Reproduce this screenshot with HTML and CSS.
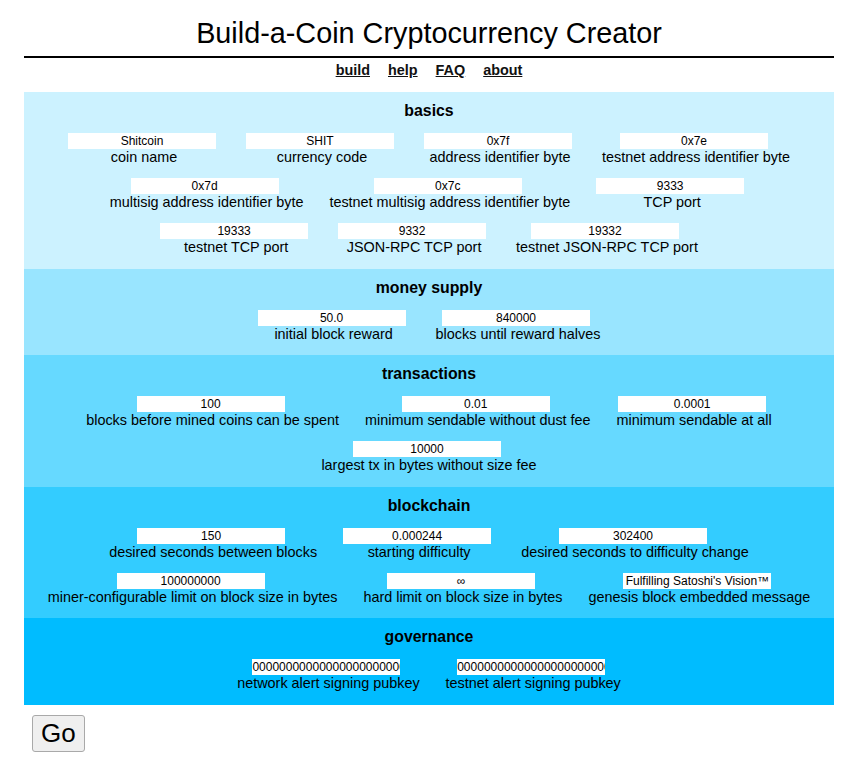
FILE: index.html
```html
<!DOCTYPE html>
<html lang="en">
<head>
  <meta charset="UTF-8">
  <title>Build-a-Coin Cryptocurrency Creator</title>
  <link rel="stylesheet" href="styles.css">
</head>
<body>

<div class="page">
  <h1 class="title">Build-a-Coin Cryptocurrency Creator</h1>

  <div class="menu">
    <a href="#">build</a>
    <a href="#">help</a>
    <a href="#">FAQ</a>
    <a href="#">about</a>
  </div>

  <form class="builder" onsubmit="return false">
    <div class="group basics">
      <h2>basics</h2>
      <div class="row">
        <label class="field"><input type="text" value="Shitcoin"><span>coin name</span></label>
        <label class="field"><input type="text" value="SHIT"><span>currency code</span></label>
        <label class="field"><input type="text" value="0x7f"><span>address identifier byte</span></label>
        <label class="field"><input type="text" value="0x7e"><span>testnet address identifier byte</span></label>
      </div>
      <div class="row">
        <label class="field"><input type="text" value="0x7d"><span>multisig address identifier byte</span></label>
        <label class="field"><input type="text" value="0x7c"><span>testnet multisig address identifier byte</span></label>
        <label class="field"><input type="text" value="9333"><span>TCP port</span></label>
      </div>
      <div class="row">
        <label class="field"><input type="text" value="19333"><span>testnet TCP port</span></label>
        <label class="field"><input type="text" value="9332"><span>JSON-RPC TCP port</span></label>
        <label class="field"><input type="text" value="19332"><span>testnet JSON-RPC TCP port</span></label>
      </div>
    </div>

    <div class="group supply">
      <h2>money supply</h2>
      <div class="row">
        <label class="field"><input type="text" value="50.0"><span>initial block reward</span></label>
        <label class="field"><input type="text" value="840000"><span>blocks until reward halves</span></label>
      </div>
    </div>

    <div class="group transactions">
      <h2>transactions</h2>
      <div class="row">
        <label class="field"><input type="text" value="100"><span>blocks before mined coins can be spent</span></label>
        <label class="field"><input type="text" value="0.01"><span>minimum sendable without dust fee</span></label>
        <label class="field"><input type="text" value="0.0001"><span>minimum sendable at all</span></label>
      </div>
      <div class="row">
        <label class="field"><input type="text" value="10000"><span>largest tx in bytes without size fee</span></label>
      </div>
    </div>

    <div class="group blockchain">
      <h2>blockchain</h2>
      <div class="row">
        <label class="field"><input type="text" value="150"><span>desired seconds between blocks</span></label>
        <label class="field"><input type="text" value="0.000244"><span>starting difficulty</span></label>
        <label class="field"><input type="text" value="302400"><span>desired seconds to difficulty change</span></label>
      </div>
      <div class="row">
        <label class="field"><input type="text" value="100000000"><span>miner-configurable limit on block size in bytes</span></label>
        <label class="field"><input type="text" value="∞"><span>hard limit on block size in bytes</span></label>
        <label class="field"><input type="text" value="Fulfilling Satoshi's Vision™"><span>genesis block embedded message</span></label>
      </div>
    </div>

    <div class="group governance">
      <h2>governance</h2>
      <div class="row">
        <label class="field"><input type="text" value="0000000000000000000000000000000000000000"><span>network alert signing pubkey</span></label>
        <label class="field"><input type="text" value="0000000000000000000000000000000000000000"><span>testnet alert signing pubkey</span></label>
      </div>
    </div>

    <button class="go" type="submit">Go</button>
  </form>
</div>

</body>
</html>
```

FILE: styles.css
```css
body {
  font-family: "Liberation Sans", Arial, sans-serif;
  font-size: 14.4px;
  color: #000;
  margin: 8px;
  background-color: #fff;
}
.page {
  margin: 0 16px;
}
.title {
  margin: 9px 0 0;
  padding-bottom: 6px;
  border-bottom: 2px solid #000;
  font-size: 28.8px;
  font-weight: normal;
  text-align: center;
}
.menu {
  margin-top: 4px;
  text-align: center;
  font-weight: bold;
}
.menu a {
  color: #111;
  margin: 0 7px;
}
.builder {
  margin-top: 14px;
}
.group {
  padding: 10px 0 13.5px;
}
.group h2 {
  margin: 0;
  font-size: 15.84px;
  text-align: center;
}
.basics { background-color: #ccf2ff; }
.supply { background-color: #99e5ff; }
.transactions { background-color: #66d9ff; }
.blockchain { background-color: #33ccff; }
.governance { background-color: #00bcff; }
.row {
  display: flex;
  justify-content: center;
  gap: 26px;
  margin-top: 13px;
}
.field {
  display: flex;
  flex-direction: column;
  align-items: center;
}
.field input {
  display: block;
  width: 148px;
  height: 16px;
  margin: 0 4px 0 0;
  padding: 0;
  border: none;
  font-family: "Liberation Sans", Arial, sans-serif;
  font-size: 12px;
  text-align: center;
  color: #000;
  background-color: #fff;
}
.field span {
  white-space: nowrap;
}
.go {
  margin: 10px 0 0 8px;
  padding: 2px 8px;
  font-family: "Liberation Sans", Arial, sans-serif;
  font-size: 26px;
  color: #000;
  background-color: #efefef;
  border: 1px solid #a9a9a9;
  border-radius: 3px;
}
```
